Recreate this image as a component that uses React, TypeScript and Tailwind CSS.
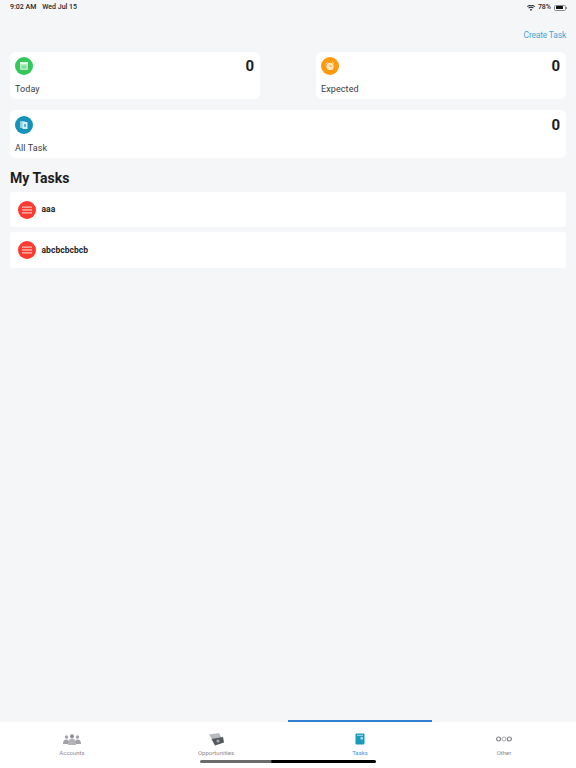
import React from "react";

const font = { fontFamily: "Roboto, 'Liberation Sans', sans-serif" };

function StatCard({ color, label, icon, className }: { color: string; label: string; icon: React.ReactNode; className: string }) {
  return (
    <div className={`bg-white rounded-[6px] h-[47px] pl-[5px] pr-[6px] ${className}`}>
      <div className="flex justify-between items-start">
        <div className={`w-[18px] h-[18px] rounded-full flex items-center justify-center ${color}`}>{icon}</div>
        <span className="text-[15px] leading-[18px] font-bold text-[#1c1c1e]">0</span>
      </div>
      <div className="text-[9px] leading-[12px] mt-[8px] tracking-[0.1px] text-[#3c3c43]">{label}</div>
    </div>
  );
}

function TaskRow({ label, className }: { label: string; className: string }) {
  return (
    <div className={`bg-white rounded-[3px] flex items-center pl-[8px] gap-[5.5px] ${className}`}>
      <div className="w-[18px] h-[18px] rounded-full bg-[#fb3a30] flex items-center justify-center">
        <svg width="10" height="8" viewBox="0 0 10 8" fill="#ffc9c5">
          <rect x="0" y="0.5" width="10" height="1.2" />
          <rect x="0" y="3.4" width="10" height="1.2" />
          <rect x="0" y="6.3" width="10" height="1.2" />
        </svg>
      </div>
      <span className="text-[8.5px] font-bold tracking-[0.05px] text-[#26262a]">{label}</span>
    </div>
  );
}

function Tab({ label, icon, active }: { label: string; icon: React.ReactNode; active?: boolean }) {
  return (
    <div className="flex-1 flex flex-col items-center bg-white">
      <div className={`h-[2px] w-full ${active ? "bg-[#2f7fd0]" : "bg-[#f4f6f8]"}`} />
      <div className="h-[14px] mt-[10px] flex items-center justify-center">{icon}</div>
      <div className={`text-[6px] leading-[7px] mt-[3px] ${active ? "text-[#4a90d9]" : "text-[#8a8a8e]"}`}>{label}</div>
    </div>
  );
}

export default function App() {
  return (
    <div style={font} className="w-[576px] h-[768px] bg-[#f4f6f8] flex flex-col relative overflow-hidden">
      <div className="h-[14px] pt-[1px] flex items-center justify-between pl-[10px] pr-[9px] text-[7px] font-medium text-[#26262a]">
        <div className="flex gap-[6px]">
          <span>9:02 AM</span>
          <span>Wed Jul 15</span>
        </div>
        <div className="flex items-center gap-[3px]">
          <svg width="8" height="6" viewBox="0 0 16 12" fill="#26262a">
            <path d="M8 12 5.6 9.2a3.6 3.6 0 0 1 4.8 0L8 12ZM3.9 7.2 2.6 5.6a8.2 8.2 0 0 1 10.8 0l-1.3 1.6a6 6 0 0 0-8.2 0ZM1.3 4.2 0 2.7a12.3 12.3 0 0 1 16 0l-1.3 1.5a10.2 10.2 0 0 0-13.4 0Z" />
          </svg>
          <span>78%</span>
          <div className="flex items-center">
            <div className="w-[12px] h-[6px] rounded-[1.5px] border-[0.5px] border-[#8a8a8e] p-[0.5px]">
              <div className="h-full w-[78%] bg-[#111] rounded-[0.5px]" />
            </div>
            <div className="w-[1px] h-[2px] bg-[#8a8a8e]" />
          </div>
        </div>
      </div>

      <div className="h-[38px] flex items-start justify-end pr-[10px] pt-[15px]">
        <span className="text-[8.5px] leading-[13px] tracking-[-0.2px] text-[#4ba6cf]">Create Task</span>
      </div>

      <div className="flex justify-between px-[10px]">
        <StatCard
          className="w-[250px] pt-[5px]"
          color="bg-[#34c759]"
          label="Today"
          icon={
            <svg width="10" height="10" viewBox="0 0 10 10">
              <rect x="1" y="1" width="8" height="8" rx="1" fill="#b5ecc5" />
              <rect x="1" y="1" width="8" height="2" fill="#e2f8e8" />
              <rect x="2.5" y="4.5" width="5" height="3" fill="#7fdc9b" />
            </svg>
          }
        />
        <StatCard
          className="w-[250px] pt-[5px]"
          color="bg-[#ff9a0f]"
          label="Expected"
          icon={
            <svg width="10" height="10" viewBox="0 0 10 10">
              <circle cx="5" cy="5.4" r="3.6" fill="#ffe9c8" />
              <path d="M1.2 2.6 2.8 1M8.8 2.6 7.2 1" stroke="#ffe9c8" strokeWidth="1" />
              <path d="M5 3.4v2.2h1.8" stroke="#ff9a0f" strokeWidth="0.8" fill="none" />
            </svg>
          }
        />
      </div>

      <div className="px-[10px] mt-[11px]">
        <StatCard
          className="w-full h-[48px] pt-[6px]"
          color="bg-[#1593b9]"
          label="All Task"
          icon={
            <svg width="10" height="10" viewBox="0 0 10 10">
              <rect x="1" y="1" width="5" height="7" rx="0.6" fill="#8fd0e3" />
              <rect x="3.5" y="2" width="5" height="7" rx="0.6" fill="#d4eff7" />
              <rect x="5" y="4" width="2" height="3" fill="#5fb6d0" />
            </svg>
          }
        />
      </div>

      <div className="text-[14px] leading-[18px] font-bold text-[#1c1c1e] px-[10px] mt-[11px]">My Tasks</div>

      <div className="flex flex-col gap-[5px] px-[10px] mt-[5px]">
        <TaskRow label="aaa" className="h-[35px]" />
        <TaskRow label="abcbcbcbcb" className="h-[36px]" />
      </div>

      <div className="flex-1" />

      <div className="h-[48px] flex">
        <Tab
          label="Accounts"
          icon={
            <svg width="18" height="11" viewBox="0 0 18 11" fill="#a3a3a7">
              <circle cx="3.5" cy="3" r="1.7" />
              <circle cx="14.5" cy="3" r="1.7" />
              <circle cx="9" cy="2.2" r="2" fill="#8f8f94" />
              <path d="M0 10c0-3 1.2-4.6 3.5-4.6S6 7 6 10ZM12 10c0-3 .2-4.6 2.5-4.6S18 7 18 10Z" />
              <path d="M5 11c0-4 1.2-6.4 4-6.4s4 2.4 4 6.4Z" fill="#b4b4b8" />
            </svg>
          }
        />
        <Tab
          label="Opportunities"
          icon={
            <svg width="15" height="13" viewBox="0 0 15 13">
              <path d="M0 1.5 10 0l3 6-9 2Z" fill="#b8bcc0" />
              <path d="M2.5 6 14 4l1 5.5-9 3Z" fill="#55585c" />
              <circle cx="9" cy="8" r="1.6" fill="#a8abaf" />
            </svg>
          }
        />
        <Tab
          active
          label="Tasks"
          icon={
            <svg width="10" height="12" viewBox="0 0 10 12">
              <rect x="0.5" y="0.5" width="9" height="11" rx="1" fill="#1b9bbb" />
              <rect x="2" y="1.8" width="6" height="1" fill="#9fdcea" />
              <rect x="5.5" y="4" width="2.5" height="2.5" fill="#9fdcea" />
            </svg>
          }
        />
        <Tab
          label="Other"
          icon={
            <svg width="16" height="6" viewBox="0 0 16 6" fill="none">
              <circle cx="2.6" cy="3" r="2" stroke="#858589" strokeWidth="1.2" />
              <circle cx="8" cy="3" r="2" stroke="#b0b0b4" strokeWidth="1" />
              <circle cx="13.4" cy="3" r="2" stroke="#858589" strokeWidth="1.2" />
            </svg>
          }
        />
      </div>

      <div className="absolute left-[200px] top-[760px] w-[176px] h-[3px] rounded-full bg-[linear-gradient(to_right,#6b6b6b_0%,#6b6b6b_40%,#000_41%,#000_100%)]" />
    </div>
  );
}
